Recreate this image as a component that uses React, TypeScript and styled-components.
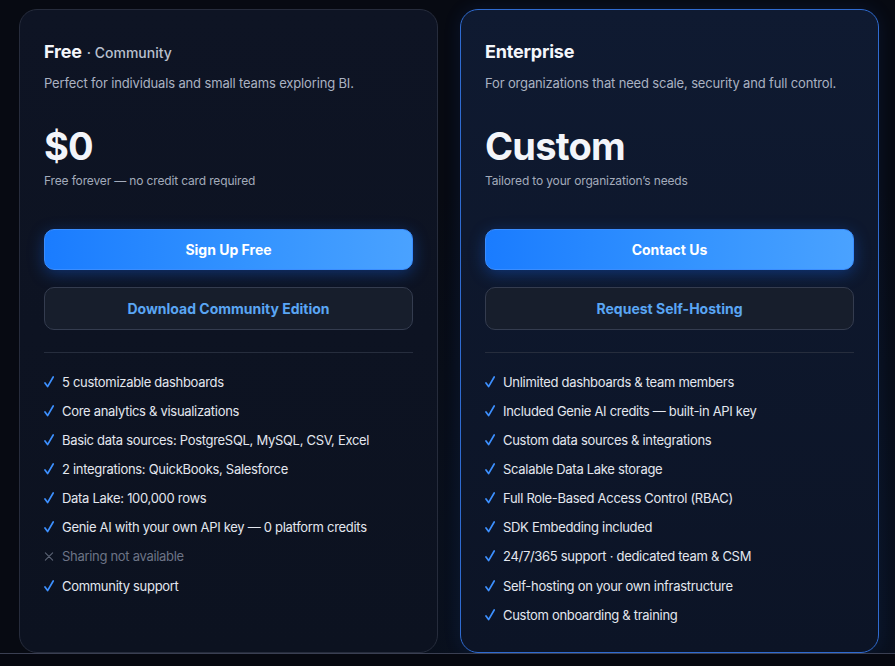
import React from "react";
import styled, { createGlobalStyle } from "styled-components";

const Global = createGlobalStyle`
  html, body { margin: 0; padding: 0; background: #060810; }
  body { font-family: Inter, "Noto Sans", sans-serif; -webkit-font-smoothing: antialiased; }
  * { box-sizing: border-box; }
`;

const Page = styled.div`
  width: 895px;
  height: 666px;
  background: #060810;
  overflow: hidden;
`;

const Section = styled.div`
  display: grid;
  grid-template-columns: 419px 419px;
  column-gap: 22px;
  padding: 9px 0 0 19px;
  height: 654px;
  border-bottom: 1px solid #3a3f52;
  background: radial-gradient(ellipse at 75% 100%, #0a1426 0%, #070a12 55%);
  overflow: hidden;
`;

const Card = styled.div<{ $featured?: boolean }>`
  height: 644px;
  border-radius: 18px;
  border: 1px solid ${(p) => (p.$featured ? "#2f6bd0" : "#262c3c")};
  background: ${(p) =>
    p.$featured
      ? "linear-gradient(180deg, #0f1a31 0%, #0c1426 100%)"
      : "linear-gradient(180deg, #0e1424 0%, #0c1220 100%)"};
  box-shadow: ${(p) => (p.$featured ? "0 0 18px rgba(40, 100, 220, 0.12)" : "none")};
  padding: 31px 24px 0 24px;
  display: flex;
  flex-direction: column;
`;

const TitleRow = styled.div`
  display: flex;
  align-items: baseline;
  gap: 5px;
  height: 24px;
`;

const Title = styled.h3`
  margin: 0;
  font-size: 18px;
  font-weight: 700;
  color: #f4f6fb;
  letter-spacing: -0.2px;
`;

const Tag = styled.span`
  font-size: 14px;
  font-weight: 500;
  color: #b9c0ce;
`;

const Desc = styled.p`
  margin: 9px 0 0 0;
  font-size: 13px;
  line-height: 18px;
  color: #aab2c2;
  letter-spacing: -0.15px;
`;

const Price = styled.div`
  margin-top: 32px;
  font-size: 38px;
  line-height: 44px;
  font-weight: 700;
  color: #f3f5fa;
  letter-spacing: -0.8px;
`;

const PriceNote = styled.div`
  margin-top: 5px;
  font-size: 12px;
  line-height: 16px;
  color: #a3abbb;
  letter-spacing: -0.15px;
`;

const Buttons = styled.div`
  margin-top: 40px;
  display: flex;
  flex-direction: column;
  gap: 17px;
`;

const Button = styled.button<{ $primary?: boolean }>`
  height: ${(p) => (p.$primary ? "41px" : "43px")};
  width: 100%;
  border-radius: 10px;
  font-family: inherit;
  font-size: 14px;
  font-weight: 700;
  cursor: pointer;
  border: 1px solid ${(p) => (p.$primary ? "#3a8dff" : "#343c4f")};
  color: ${(p) => (p.$primary ? "#ffffff" : "#5aa6f4")};
  background: ${(p) =>
    p.$primary ? "linear-gradient(90deg, #1a7cff 0%, #3393ff 55%, #4aa2ff 100%)" : "#171e2c"};
  box-shadow: ${(p) => (p.$primary ? "0 4px 16px rgba(20, 110, 255, 0.35)" : "none")};
`;

const Divider = styled.hr`
  margin: 22px 0 0 0;
  border: 0;
  border-top: 1px solid #262d3d;
`;

const List = styled.ul`
  list-style: none;
  margin: 14px 0 0 0;
  padding: 0;
  display: flex;
  flex-direction: column;
`;

const Item = styled.li<{ $off?: boolean }>`
  display: flex;
  align-items: center;
  gap: 8px;
  height: 29.15px;
  font-size: 13px;
  color: ${(p) => (p.$off ? "#6c7486" : "#e3e7ef")};
  letter-spacing: -0.3px;
`;

const Mark = styled.span<{ $off?: boolean }>`
  width: 10px;
  display: inline-flex;
  justify-content: center;
  color: ${(p) => (p.$off ? "#5b6374" : "#3d90ff")};
`;

type Feature = { text: string; off?: boolean };

const freeFeatures: Feature[] = [
  { text: "5 customizable dashboards" },
  { text: "Core analytics & visualizations" },
  { text: "Basic data sources: PostgreSQL, MySQL, CSV, Excel" },
  { text: "2 integrations: QuickBooks, Salesforce" },
  { text: "Data Lake: 100,000 rows" },
  { text: "Genie AI with your own API key — 0 platform credits" },
  { text: "Sharing not available", off: true },
  { text: "Community support" },
];

const entFeatures: Feature[] = [
  { text: "Unlimited dashboards & team members" },
  { text: "Included Genie AI credits — built-in API key" },
  { text: "Custom data sources & integrations" },
  { text: "Scalable Data Lake storage" },
  { text: "Full Role-Based Access Control (RBAC)" },
  { text: "SDK Embedding included" },
  { text: "24/7/365 support · dedicated team & CSM" },
  { text: "Self-hosting on your own infrastructure" },
  { text: "Custom onboarding & training" },
];

const Check = () => (
  <svg width="10" height="12" viewBox="0 0 10 12" fill="none">
    <path d="M1 7 L3.6 10.6 L9.2 1" stroke="currentColor" strokeWidth="1.7" strokeLinecap="round" strokeLinejoin="round" />
  </svg>
);

const Cross = () => (
  <svg width="11" height="11" viewBox="0 0 11 11" fill="none">
    <path d="M1.5 1.5 L9.5 9.5 M9.5 1.5 L1.5 9.5" stroke="currentColor" strokeWidth="1.2" strokeLinecap="round" />
  </svg>
);

const Features = ({ items }: { items: Feature[] }) => (
  <List>
    {items.map((f) => (
      <Item key={f.text} $off={f.off}>
        <Mark $off={f.off}>{f.off ? <Cross /> : <Check />}</Mark>
        {f.text}
      </Item>
    ))}
  </List>
);

export default function App() {
  return (
    <>
      <Global />
      <Page>
        <Section>
          <Card>
            <TitleRow>
              <Title>Free</Title>
              <Tag>· Community</Tag>
            </TitleRow>
            <Desc>Perfect for individuals and small teams exploring BI.</Desc>
            <Price>$0</Price>
            <PriceNote>Free forever — no credit card required</PriceNote>
            <Buttons>
              <Button $primary>Sign Up Free</Button>
              <Button>Download Community Edition</Button>
            </Buttons>
            <Divider />
            <Features items={freeFeatures} />
          </Card>
          <Card $featured>
            <TitleRow>
              <Title>Enterprise</Title>
            </TitleRow>
            <Desc>For organizations that need scale, security and full control.</Desc>
            <Price>Custom</Price>
            <PriceNote>Tailored to your organization’s needs</PriceNote>
            <Buttons>
              <Button $primary>Contact Us</Button>
              <Button>Request Self-Hosting</Button>
            </Buttons>
            <Divider />
            <Features items={entFeatures} />
          </Card>
        </Section>
      </Page>
    </>
  );
}
